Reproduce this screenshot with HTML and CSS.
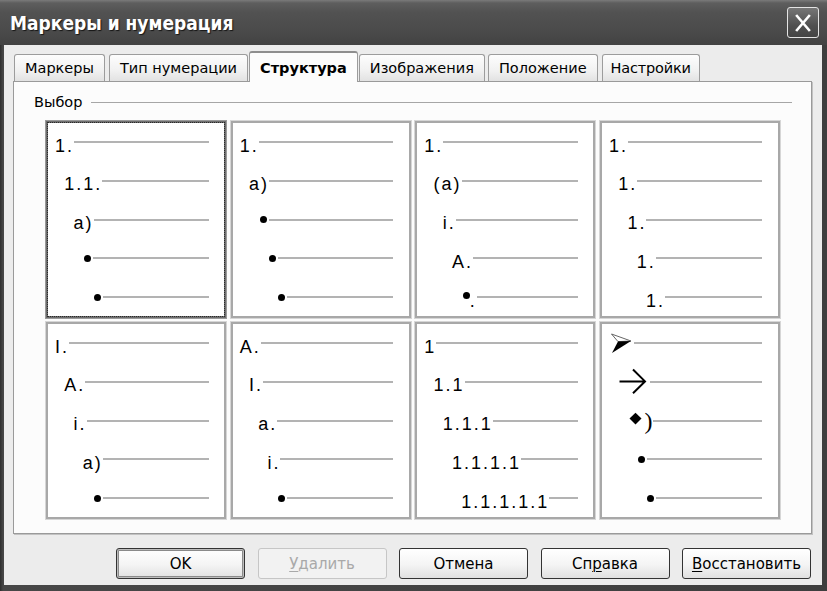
FILE: index.html
```html
<!DOCTYPE html>
<html lang="ru">
<head>
<meta charset="utf-8">
<title>Маркеры и нумерация</title>
<link rel="stylesheet" href="styles.css">
</head>
<body>
<div class="window">
  <div class="titlebar">
    <span class="title">Маркеры и нумерация</span>
    <button class="close" aria-label="Закрыть">
      <svg width="18" height="20" viewBox="0 0 18 20"><path d="M3 3 L15 17 M15 3 L3 17" stroke="#fff" stroke-width="2.6" stroke-linecap="square" fill="none"/></svg>
    </button>
  </div>
  <div class="client">
    <div class="tabs">
      <div class="tab">Маркеры</div>
      <div class="tab">Тип нумерации</div>
      <div class="tab sel">Структура</div>
      <div class="tab">Изображения</div>
      <div class="tab">Положение</div>
      <div class="tab">Настройки</div>
    </div>
    <div class="panel">
      <div class="group-head"><span>Выбор</span><div class="rule"></div></div>
      <div class="grid">
        <div class="cell selected">
          <div class="row l0"><span class="lbl">1.</span><i class="ln"></i></div>
          <div class="row l1"><span class="lbl">1.1.</span><i class="ln"></i></div>
          <div class="row l2"><span class="lbl">a)</span><i class="ln"></i></div>
          <div class="row l3"><span class="dot"></span><i class="ln"></i></div>
          <div class="row l4"><span class="dot"></span><i class="ln"></i></div>
        </div>
        <div class="cell">
          <div class="row l0"><span class="lbl">1.</span><i class="ln"></i></div>
          <div class="row l1"><span class="lbl">a)</span><i class="ln"></i></div>
          <div class="row l2"><span class="dot"></span><i class="ln"></i></div>
          <div class="row l3"><span class="dot"></span><i class="ln"></i></div>
          <div class="row l4"><span class="dot"></span><i class="ln"></i></div>
        </div>
        <div class="cell">
          <div class="row l0"><span class="lbl">1.</span><i class="ln"></i></div>
          <div class="row l1"><span class="lbl">(a)</span><i class="ln"></i></div>
          <div class="row l2"><span class="lbl">i.</span><i class="ln"></i></div>
          <div class="row l3"><span class="lbl">A.</span><i class="ln"></i></div>
          <div class="row l4"><span class="dot hi"></span><span class="lbl">.</span><i class="ln"></i></div>
        </div>
        <div class="cell">
          <div class="row l0"><span class="lbl">1.</span><i class="ln"></i></div>
          <div class="row l1"><span class="lbl">1.</span><i class="ln"></i></div>
          <div class="row l2"><span class="lbl">1.</span><i class="ln"></i></div>
          <div class="row l3"><span class="lbl">1.</span><i class="ln"></i></div>
          <div class="row l4"><span class="lbl">1.</span><i class="ln"></i></div>
        </div>
        <div class="cell">
          <div class="row l0"><span class="lbl">I.</span><i class="ln"></i></div>
          <div class="row l1"><span class="lbl">A.</span><i class="ln"></i></div>
          <div class="row l2"><span class="lbl">i.</span><i class="ln"></i></div>
          <div class="row l3"><span class="lbl">a)</span><i class="ln"></i></div>
          <div class="row l4"><span class="dot"></span><i class="ln"></i></div>
        </div>
        <div class="cell">
          <div class="row l0"><span class="lbl">A.</span><i class="ln"></i></div>
          <div class="row l1"><span class="lbl">I.</span><i class="ln"></i></div>
          <div class="row l2"><span class="lbl">a.</span><i class="ln"></i></div>
          <div class="row l3"><span class="lbl">i.</span><i class="ln"></i></div>
          <div class="row l4"><span class="dot"></span><i class="ln"></i></div>
        </div>
        <div class="cell">
          <div class="row l0"><span class="lbl">1</span><i class="ln"></i></div>
          <div class="row l1"><span class="lbl">1.1</span><i class="ln"></i></div>
          <div class="row l2"><span class="lbl">1.1.1</span><i class="ln"></i></div>
          <div class="row l3"><span class="lbl">1.1.1.1</span><i class="ln"></i></div>
          <div class="row l4"><span class="lbl">1.1.1.1.1</span><i class="ln"></i></div>
        </div>
        <div class="cell">
          <div class="row l0">
            <svg class="sym arrowhead" width="25" height="21" viewBox="0 0 25 21">
              <polygon points="2.5,1 22,8 9,8.6" fill="#fff" stroke="#555" stroke-width="0.9" stroke-linejoin="round"/>
              <polygon points="9,8.6 22,8 3,20" fill="#000"/>
            </svg>
            <i class="ln"></i>
          </div>
          <div class="row l1">
            <svg class="sym arrow" width="32" height="28" viewBox="0 0 32 28">
              <path d="M1.5 14.4 H27 M15 2.5 L27 14.4 L15 26.3" stroke="#000" stroke-width="2" fill="none"/>
            </svg>
            <i class="ln"></i>
          </div>
          <div class="row l2">
            <svg class="sym diamond" width="16" height="14" viewBox="0 0 16 14">
              <polygon points="8.5,0.8 14.5,6.6 8.5,12.4 2.5,6.6" fill="#000"/>
            </svg>
            <span class="paren">)</span>
            <i class="ln"></i>
          </div>
          <div class="row l3"><span class="dot"></span><i class="ln"></i></div>
          <div class="row l4"><span class="dot"></span><i class="ln"></i></div>
        </div>
      </div>
    </div>
    <div class="buttons">
      <button class="btn default">OK</button>
      <button class="btn" disabled><u>У</u>далить</button>
      <button class="btn">Отмена</button>
      <button class="btn">Сп<u>р</u>авка</button>
      <button class="btn"><u>В</u>осстановить</button>
    </div>
  </div>
</div>
</body>
</html>
```
FILE: styles.css
```css
* { box-sizing: border-box; }
html, body { margin: 0; padding: 0; }
body {
  width: 827px;
  height: 591px;
  overflow: hidden;
  background: #3b3b3b;
  font-family: "DejaVu Sans", sans-serif;
}
.window {
  width: 827px;
  height: 591px;
  display: flex;
  flex-direction: column;
  background: linear-gradient(90deg, #2e2e2e, #474747 3px, #3e3e3e);
}
.titlebar {
  height: 45px;
  flex: none;
  display: flex;
  align-items: center;
  justify-content: space-between;
  padding: 0 8px 0 10px;
  background: linear-gradient(#7a7a7a 0, #5e5e5e 3px, #525252 12px, #4a4a4a 32px, #424242 45px);
}
.title {
  color: #fff;
  font-family: "DejaVu Sans Condensed", "DejaVu Sans", sans-serif;
  font-weight: bold;
  font-size: 19px;
  text-shadow: 1px 1px 1px #151515;
}
.close {
  width: 32px;
  height: 31px;
  padding: 0;
  border: 1px solid #e4e4e4;
  border-radius: 3px;
  background: linear-gradient(#767676, #505050 60%, #444);
  display: flex;
  align-items: center;
  justify-content: center;
}
.client {
  flex: 1;
  margin: 0 5px 6px 4px;
  padding: 6px 10px 0 9px;
  background: #ececec;
  display: flex;
  flex-direction: column;
}
.tabs {
  display: flex;
  align-items: flex-end;
  height: 30px;
  padding-left: 1px;
}
.tab {
  height: 27px;
  padding: 0 10px;
  margin-right: 4px;
  display: flex;
  align-items: center;
  font-size: 14.5px;
  color: #000;
  border: 1px solid #9c9c9c;
  border-bottom: none;
  border-radius: 3px 3px 0 0;
  background: linear-gradient(#fdfdfd, #f1f1f1 60%, #e2e2e2);
}
.tab:last-child { padding: 0 8px; letter-spacing: -0.2px; }
.tab.sel {
  height: 31px;
  margin: 0 1px -1px -3px;
  padding: 0 10px;
  font-size: 14.5px;
  font-weight: bold;
  background: #fcfcfc;
  border-top: 2px solid #8e8e8e;
  position: relative;
  z-index: 1;
}
.tab.sel + .tab { margin-right: 3px; }
.panel {
  height: 453px;
  flex: none;
  border: 1px solid #9a9a9a;
  background: #fcfcfc;
  box-shadow: 1px 1px 0 #c2c2c2;
  padding: 11px 19px 0 20px;
}
.group-head {
  display: flex;
  align-items: center;
  height: 18px;
  font-size: 14.5px;
  color: #000;
}
.group-head .rule {
  flex: 1;
  height: 1px;
  margin-left: 9px;
  background: #a6a6a6;
}
.grid {
  margin: 10px 0 0 12px;
  display: grid;
  grid-template-columns: repeat(4, 180px);
  grid-template-rows: repeat(2, 197px);
  column-gap: 4.67px;
  row-gap: 4px;
}
.cell {
  background: #fff;
  border: 2px solid #a8a8a8;
  box-shadow: 0 0 0 1px #d6d6d6;
  padding: 12.6px 15.5px 0 0;
  display: flex;
  flex-direction: column;
  gap: 18.75px;
  overflow: hidden;
  font-family: "Liberation Sans", Arial, sans-serif;
}
.cell.selected {
  border: 2px solid #6e6e6e;
  outline: 1px dotted #2a2a2a;
  outline-offset: -2px;
  box-shadow: 0 0 0 1px #9a9a9a;
}
.row {
  height: 20px;
  flex: none;
  display: flex;
  align-items: flex-start;
}
.l0 { padding-left: 7px; }
.l1 { padding-left: 16.25px; }
.l2 { padding-left: 25.5px; }
.l3 { padding-left: 34.75px; }
.l4 { padding-left: 44px; }
.lbl {
  font-size: 18px;
  line-height: 20px;
  letter-spacing: 2px;
  color: #000;
  white-space: nowrap;
}
.ln {
  flex: 1;
  height: 2px;
  margin-top: 5.5px;
  background: #b3b3b3;
}
.dot {
  width: 7px;
  height: 7px;
  flex: none;
  border-radius: 50%;
  background: #000;
  margin: 3px 2px 0 1.5px;
}
.dot.hi { margin: 1px 0 0 1.5px; }
.sym { flex: none; display: block; }
.arrowhead { margin-top: -4px; }
.arrow { margin-top: -8px; }
.diamond { margin-top: -2px; }
.paren {
  font-family: "Liberation Serif", serif;
  font-size: 24px;
  line-height: 20px;
  margin: -3px 1px 0 1px;
}
.buttons {
  display: flex;
  justify-content: flex-end;
  gap: 12.5px;
  margin-top: 14px;
  padding-right: 1px;
}
.btn {
  width: 129px;
  height: 31px;
  padding: 0;
  border: 1px solid #333;
  border-radius: 3px;
  background: linear-gradient(#ffffff, #f4f4f4 55%, #e0e0e0);
  font-family: "DejaVu Sans", sans-serif;
  font-size: 15px;
  color: #000;
}
.btn.default {
  box-shadow: inset 0 0 0 1px #bdbdbd, inset 0 0 0 2px #8a8a8a;
}
.btn:disabled {
  border-color: #c6c6c6;
  color: #a9a9a9;
  background: #f2f2f2;
}
.btn u { text-decoration-thickness: 1px; text-underline-offset: 2px; }
```
